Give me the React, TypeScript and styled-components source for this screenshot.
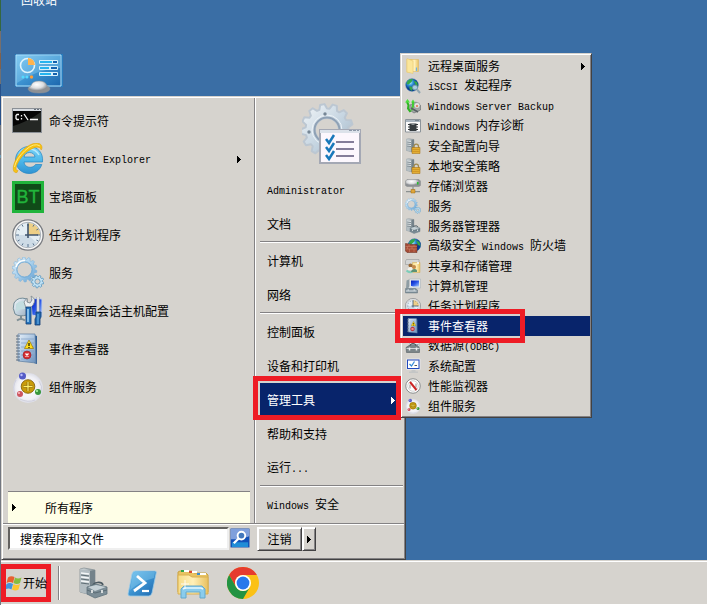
import React from "react";
import styled, { createGlobalStyle, css } from "styled-components";

const face = "#d6d3ce";
const navy = "#08246b";
const red = "#ee1c25";

const GlobalStyle = createGlobalStyle`
  *, *::before, *::after { box-sizing: border-box; }
  body { margin: 0; background: #3a6ea5; }
  button, input, a { font: inherit; color: inherit; }
  button { border: 0; background: none; padding: 0; text-align: left; cursor: default; }
  a { text-decoration: none; cursor: default; }
  svg { display: block; flex: none; }
`;

const raised = css`
  border: 1px solid;
  border-color: ${face} #424142 #424142 ${face};
  box-shadow: inset 1px 1px 0 #fff, inset -1px -1px 0 #848284;
`;

/* ---------- layout ---------- */

const Screen = styled.div`
  min-height: 100vh;
  display: grid;
  grid-template-columns: 1px minmax(0, 1fr);
  font-family: "Noto Sans CJK SC", sans-serif;
  font-size: 12px;
  line-height: 16px;
  color: #000;
  overflow: hidden;
`;

const Edge = styled.div`
  background: linear-gradient(#35673f 0 31px, #776f6c 31px 53px, #80614d 53px 69px,
    #6f7074 69px 84px, #28518a 84px 125px, #737780 125px 155px, #6d9ab3 155px 158px, #737780 158px);
`;

const Session = styled.div`
  display: flex;
  flex-direction: column;
  height: 100vh;
`;

const Desktop = styled.main`
  position: relative;
  flex: 1;
  background: #3a6ea5;
`;

const Shortcuts = styled.div`
  display: flex;
  flex-direction: column;
  align-items: center;
  gap: 46px;
  width: 76px;
  margin-top: -8px;
  color: #fff;
`;

const Taskbar = styled.footer`
  display: flex;
  align-items: center;
  height: 45px;
  background: ${face};
  border-top: 1px solid ${face};
  border-bottom: 1px solid #fff;
  box-shadow: inset 0 1px 0 #fff;
`;

const StartButton = styled.button`
  display: flex;
  align-items: center;
  gap: 1px;
  height: 38px;
  width: 50px;
  border: 5px solid ${red};
  white-space: nowrap;
`;

const Grip = styled.div`
  width: 2px;
  height: 34px;
  margin: 0 17px 0 7px;
  border-left: 1px solid #848284;
  border-right: 1px solid #fff;
`;

const Pinned = styled.nav`
  display: flex;
  gap: 18px;
`;

const StartMenu = styled.section`
  ${raised}
  position: absolute;
  left: 0;
  bottom: 0;
  width: 405px;
  padding: 1px;
  background: ${face};
`;

const Columns = styled.div`
  display: grid;
  grid-template-columns: 251px minmax(0, 1fr);
  border-bottom: 1px solid #848284;
`;

const Programs = styled.nav`
  display: flex;
  flex-direction: column;
  padding: 4px 4px 0 5px;
`;

const ProgramItem = styled.button`
  display: flex;
  align-items: center;
  gap: 5px;
  height: 38px;
  padding: 0 9px 0 4px;
`;

const Grow = styled.span`
  flex: 1;
`;

const AllPrograms = styled.button`
  display: flex;
  align-items: center;
  gap: 29px;
  height: 32px;
  margin-top: auto;
  padding-left: 4px;
  background: #ffffe7;
  border-top: 1px solid #848284;
`;

const Places = styled.nav`
  display: flex;
  flex-direction: column;
  border-left: 1px solid #848284;
  box-shadow: inset 1px 0 0 #fff;
  padding: 0 1px 1px 5px;
`;

const Portrait = styled.div`
  display: flex;
  justify-content: center;
  height: 75px;
  padding-top: 5px;
`;

const PlaceItem = styled.a<{ $active?: boolean }>`
  display: flex;
  align-items: center;
  justify-content: space-between;
  height: 34px;
  padding: 0 8px 0 7px;
  background: ${(p) => (p.$active ? navy : "transparent")};
  color: ${(p) => (p.$active ? "#fff" : "#000")};
`;

const Rule = styled.hr`
  width: 100%;
  margin: 0;
  height: 3px;
  border: 0;
  border-top: 1px solid #848284;
  box-shadow: inset 0 1px 0 #fff;
`;

const MenuFooter = styled.div`
  display: flex;
  align-items: flex-start;
  height: 34px;
  padding: 3px 0 0 5px;
  box-shadow: inset 0 1px 0 #fff;
`;

const SearchField = styled.input`
  width: 221px;
  height: 23px;
  padding: 0 10px;
  border: 2px solid;
  border-color: #63615f #efefef #efefef #63615f;
  border-radius: 0;
  background: #fff;
  outline: 0;
  &::placeholder { color: #000; opacity: 1; }
`;

const SearchButton = styled.button`
  margin: 0 7px 0 1px;
  padding-top: 1px;
`;

const PowerButton = styled.button<{ $narrow?: boolean }>`
  ${raised}
  display: flex;
  align-items: center;
  justify-content: center;
  width: ${(p) => (p.$narrow ? "14px" : "45px")};
  height: 24px;
  background: ${face};
  border-top-color: #fff;
  border-left-color: #fff;
`;

const Submenu = styled.nav`
  ${raised}
  position: absolute;
  left: 398px;
  bottom: 141px;
  width: 192px;
  display: flex;
  flex-direction: column;
  padding: 2px 1px 1px 2px;
  background: ${face};
`;

const ToolItem = styled.button<{ $active?: boolean }>`
  display: flex;
  align-items: center;
  gap: 7px;
  height: 20px;
  padding: 0 5px 0 2px;
  white-space: nowrap;
  background: ${(p) => (p.$active ? navy : "transparent")};
  color: ${(p) => (p.$active ? "#fff" : "#000")};
`;

const Marker = styled.div<{ $kind: "place" | "tool" }>`
  position: absolute;
  pointer-events: none;
  border: 5px solid ${red};
  ${(p) =>
    p.$kind === "place"
      ? "left: 251px; bottom: 139px; width: 148px; height: 44px;"
      : "left: 393px; bottom: 216px; width: 130px; height: 34px;"}
`;

const Latin = styled.span`
  font-family: "Liberation Mono", monospace;
  font-size: 10px;
  white-space: pre;
`;

const Label = ({ children }: { children: string }) => (
  <span>
    {children.split(/([\x20-\x7e]+)/).map((part, i) =>
      i % 2 ? <Latin key={i}>{part}</Latin> : part
    )}
  </span>
);

/* ---------- icons ---------- */

type IconProps = { size?: number };

const Svg = ({ size = 32, box = 32, children }: { size?: number; box?: number; children: React.ReactNode }) => (
  <svg width={size} height={size} viewBox={`0 0 ${box} ${box}`} aria-hidden="true">
    {children}
  </svg>
);

const Arrow = () => (
  <svg width="4" height="7" viewBox="0 0 4 7" shapeRendering="crispEdges" aria-hidden="true">
    <path d="M0 0h1v1h1v1h1v1h1v1h-1v1h-1v1h-1v1h-1z" fill="currentColor" />
  </svg>
);

const gearPath = (cx: number, cy: number, outer: number, inner: number, hole: number, teeth: number) => {
  const pts: string[] = [];
  for (let i = 0; i < teeth; i++) {
    const steps: [number, number][] = [[0, inner], [0.2, outer], [0.55, outer], [0.75, inner]];
    for (const [t, r] of steps) {
      const a = ((i + t) / teeth) * Math.PI * 2;
      pts.push(`${(cx + r * Math.cos(a)).toFixed(2)} ${(cy + r * Math.sin(a)).toFixed(2)}`);
    }
  }
  return `M${pts.join("L")}ZM${cx - hole} ${cy}a${hole} ${hole} 0 1 0 ${hole * 2} 0a${hole} ${hole} 0 1 0 ${-hole * 2} 0Z`;
};

const DefsSvg = styled.svg`
  position: absolute;
`;

const Defs = () => (
  <DefsSvg width="0" height="0" aria-hidden="true">
    <defs>
      <linearGradient id="ice" x2="1" y2="1"><stop stopColor="#e8f5fc" /><stop offset=".5" stopColor="#a9d0ec" /><stop offset="1" stopColor="#5b9bd0" /></linearGradient>
      <linearGradient id="steel" x2="1" y2="1"><stop stopColor="#f4f7f9" /><stop offset=".55" stopColor="#c3d3e0" /><stop offset="1" stopColor="#9fb0bf" /></linearGradient>
      <linearGradient id="case" x2="1" y2="1"><stop stopColor="#e3e8ea" /><stop offset=".5" stopColor="#8b979c" /><stop offset="1" stopColor="#4d5a60" /></linearGradient>
      <linearGradient id="blue" x2="1" y2="1"><stop stopColor="#7cc8f2" /><stop offset=".5" stopColor="#3c92d0" /><stop offset="1" stopColor="#1c66ad" /></linearGradient>
      <linearGradient id="screen" x2="1" y2="1"><stop stopColor="#0018b8" /><stop offset=".5" stopColor="#2a56e8" /><stop offset="1" stopColor="#a9cdf8" /></linearGradient>
      <linearGradient id="folder" x2="1"><stop stopColor="#f6dc88" /><stop offset=".5" stopColor="#fff0b8" /><stop offset="1" stopColor="#e9c160" /></linearGradient>
      <linearGradient id="book" x2="1" y2="1"><stop stopColor="#e4eef8" /><stop offset=".5" stopColor="#a9c3df" /><stop offset="1" stopColor="#6c90ba" /></linearGradient>
      <linearGradient id="ie" x2="0" y2="1"><stop stopColor="#7fd4f7" /><stop offset=".5" stopColor="#4fb9ea" /><stop offset="1" stopColor="#2f93d3" /></linearGradient>
      <radialGradient id="globe" cx=".35" cy=".3"><stop stopColor="#c7f5ff" /><stop offset=".45" stopColor="#3298dc" /><stop offset="1" stopColor="#073b91" /></radialGradient>
      <radialGradient id="ball" cx=".4" cy=".3"><stop stopColor="#fff" /><stop offset=".6" stopColor="#dcdddf" /><stop offset="1" stopColor="#8d9094" /></radialGradient>
      <radialGradient id="pearl"><stop stopColor="#fff" /><stop offset=".75" stopColor="#f0f0f5" /><stop offset="1" stopColor="#dcdde6" /></radialGradient>
    </defs>
  </DefsSvg>
);

const ControlPanelIcon = () => (
  <svg width="48" height="42" viewBox="0 0 48 42" aria-hidden="true">
    <path d="M0 0h48v33h-48z" fill="#277bbd" />
    <path d="M1 1h45v31h-45z" fill="url(#blue)" stroke="#b2e2fa" />
    <path d="M2 2h43v12q-23 1-43 15z" fill="#8bd0f3" opacity=".4" />
    <circle cx="12.500" cy="11.500" r="7" fill="none" stroke="#dff4fd" strokeWidth="1.600" />
    <path d="M13 11V4a7 7 0 0 1 7 7z" fill="#ffb34d" />
    <g fill="#54d9ff"><circle cx="8" cy="23" r="1.500" /><circle cx="12" cy="23" r="1.500" /></g><circle cx="16.500" cy="23" r="1.700" fill="#ff9d37" />
    <g fill="#d5f0fc"><rect x="24" y="6" width="19" height="4" rx="1" /><rect x="24" y="12" width="19" height="4" rx="1" /><rect x="24" y="18" width="19" height="4" rx="1" /></g>
    <path d="M25 8h12M25 14h9M25 20h11" stroke="#26b4ef" strokeWidth="2" /><path d="M38 8h4M36 14h6M38 20h4" stroke="#1261af" strokeWidth="2" />
    <path d="M13 35q0-2 3-3q1-5 8-5t8 5q3 1 3 3q-1 4-11 4t-11-4" fill="url(#ball)" stroke="#8d9398" strokeWidth=".5" />
  </svg>
);

const CmdIcon = () => (
  <Svg>
    <path d="M0 3h30v25H0z" fill="#8b9096" /><path d="M1 4h28v2H1z" fill="#d8dde3" /><path d="M22 4.500h2m1 0h2m1 0h1" stroke="#68717b" />
    <path d="M1 6h28v21H1z" fill="#050505" /><path d="M1 27v-6q14-4 28-14v20z" fill="#242724" />
    <path d="M7 9.500H5l-1 1v3l1 1h2M9.500 10v1.500m0 1.500v1.500M12 9l4 6M18 14.500h8" fill="none" stroke="#f8f8f8" strokeWidth="1.300" />
  </Svg>
);

const IeIcon = () => (
  <Svg>
    <path d="M30.500 19H12c.2 6 9 7 11.500 2.500h6.300C27.500 28.500 22 30.500 17 30.500 9 30.500 3.500 24 3.500 17S9 3.500 17 3.500c9 0 14.500 6.500 13.500 15.500zM12 14h11c-.5-6-10.300-6-11 0z" fill="url(#ie)" stroke="#2384c3" strokeWidth=".7" fillRule="evenodd" />
    <path d="M6 17C6 10 11 6 17 6q7 0 10 6" fill="none" stroke="#b5e8fc" strokeWidth="1.500" />
    <path d="M5 29.500C-1 31 0 19 9 9S29-2.500 30 4c.2 1-.3 2-.8 3C28 2 21 4 14 9.500 6 17 1 28 6 27.500z" fill="#f7c315" stroke="#dc9e0a" strokeWidth=".5" />
    <path d="M2.500 24Q4 16 13 7.500T28 3" fill="none" stroke="#ffe978" />
  </Svg>
);

const BtIcon = () => (
  <Svg>
    <path d="M0 0h32v32H0z" fill="#20b43b" /><path d="M3 3h26v26H3z" fill="#104b18" />
    <text x="16" y="22" textAnchor="middle" fontFamily="Liberation Sans" fontSize="18" fill="#21b43b" stroke="#21b43b" strokeWidth=".4">BT</text>
  </Svg>
);

const ClockIcon = ({ size }: IconProps) => (
  <Svg size={size}>
    <circle cx="16" cy="16" r="15.200" fill="#f8f8f8" stroke="#787b80" strokeWidth="1.300" /><circle cx="16" cy="16" r="12.700" fill="#e4eef4" stroke="#a8aeb5" />
    <path d="M16 16V4a12 12 0 0 1 12 12z" fill="#edcf87" /><path d="M4 16A12 12 0 0 0 25 24L16 16z" fill="#cddbe6" />
    <path d="M16 4v3M28 16h-3M16 28v-3M4 16h3M22 5.600l-1 2M26.400 10l-2 1M26.400 22l-2-1M22 26.400l-1-2M10 26.400l1-2M5.600 22l2-1M5.600 10l2 1M10 5.600l1 2" stroke="#59738e" />
    <path d="M16 5v14M13 16h13" stroke="#40556e" strokeWidth="1.600" />
  </Svg>
);

const ServicesIcon = ({ size }: IconProps) => (
  <Svg size={size}>
    <path d={gearPath(12.5, 12.5, 12.5, 10.3, 7.4, 14)} fill="url(#ice)" stroke="#7fb4da" strokeWidth=".6" fillRule="evenodd" />
    <circle cx="12.500" cy="12.500" r="7.800" fill="none" stroke="#6ea9d6" strokeWidth=".8" />
    <path d="M4 10a9 9 0 0 1 9-6.500" fill="none" stroke="#fff" strokeWidth="1.500" />
    <path d={gearPath(25.5, 24.5, 6.4, 4.8, 2.6, 9)} fill="#c3e3f5" stroke="#5795bf" strokeWidth=".8" fillRule="evenodd" />
  </Svg>
);

const RemoteConfigIcon = () => (
  <Svg>
    <path d="M19 4q8-1 11 0v18l-10-2z" fill="url(#screen)" stroke="#c5d2e5" />
    <path d="M2 8Q6 1 15 4v16q-8 2-12-1-3-6-1-11" fill="url(#steel)" stroke="#738b96" /><path d="M4 9q5-5 10-2l-1 7Q7 14 4 17z" fill="#c3dde0" />
    <path d="M9 21v4M5 25.500q4-3 8 0" fill="none" stroke="#7d8e95" strokeWidth="2" />
    <path d="M14 13l-2-6 3-4v4l3 1 2-3-1-4q6 3 2 9l-3 3z" fill="#eceff0" stroke="#7e898f" strokeWidth=".8" />
    <path d="M14 12h5v17h-5z" fill="#2574bc" stroke="#123d75" strokeWidth=".8" /><path d="M16 14v13" stroke="#a4d6f8" strokeWidth="1.500" />
    <path d="M26 2v15" stroke="#9aa1a6" strokeWidth="3" /><path d="M26 2v15" stroke="#f1f2f3" strokeWidth="1.500" /><path d="M24 17h5v5l-1 2v6h-5v-6l1-2z" fill="#2269b0" stroke="#123d75" strokeWidth=".8" /><path d="M26 19v10" stroke="#72bbee" />
  </Svg>
);

const EventIcon = ({ size }: IconProps) => (
  <Svg size={size}>
    <path d="M22 2l3 1v28l-3-1z" fill="#2f5e96" /><path d="M6 1h17l1 29-18-2z" fill="url(#book)" stroke="#5c7ca1" strokeWidth=".7" />
    <path d="M9 6h13M9 10h13M9 14h13M9 18h13M9 22h13M9 26h13" stroke="#7f9fc4" strokeWidth=".7" />
    <path d="M4 3h4M4 6h4M4 9h4M4 12h4M4 15h4M4 18h4M4 21h4M4 24h4M4 27h4" stroke="#5f7183" strokeWidth="1.200" />
    <path d="M17 7l4.500 8.500h-9z" fill="#ffdd18" stroke="#9c7700" strokeWidth=".7" /><path d="M17 10v3m0 1v1" stroke="#272200" strokeWidth="1.300" />
    <circle cx="15" cy="22" r="4" fill="#d62d30" stroke="#931c27" strokeWidth=".6" /><path d="M13.500 20.500l3 3m0-3l-3 3" stroke="#fff" strokeWidth="1.400" />
  </Svg>
);

const ComponentIcon = ({ size }: IconProps) => (
  <Svg size={size}>
    <circle cx="16" cy="17" r="15" fill="url(#pearl)" /><path d="M4 9Q0 16 3 23M8 28q8 4 15 1M27 10q4 5 2 12" fill="none" stroke="#c9c9d8" strokeWidth=".8" />
    <circle cx="16" cy="15.500" r="6.800" fill="#c99c0a" stroke="#775600" strokeWidth=".8" /><path d="M11.500 15.500h9M16 11v9" stroke="#755000" strokeWidth="2.500" /><path d="M11.500 15.500h9M16 11v9" stroke="#fff06a" strokeWidth="1.300" />
    <circle cx="10.500" cy="5" r="3.500" fill="#545bc6" /><circle cx="9.500" cy="4" r="1.200" fill="#b9bcff" />
    <circle cx="8" cy="23" r="3" fill="#cc5560" /><circle cx="7" cy="22" r="1" fill="#ffc0c3" /><circle cx="26" cy="21" r="3" fill="#38963c" /><circle cx="25" cy="20" r="1" fill="#baffaf" />
  </Svg>
);

const PortraitIcon = () => (
  <svg width="60" height="62" viewBox="0 0 60 62" aria-hidden="true">
    <path d={gearPath(25, 27, 26, 21.5, 12, 13)} fill="url(#steel)" stroke="#bcc7d2" strokeWidth="2" strokeLinejoin="round" fillRule="evenodd" />
    <circle cx="25" cy="27" r="12.500" fill="none" stroke="#8fa1b5" strokeWidth="2" /><circle cx="25" cy="27" r="15" fill="none" stroke="#edf3f8" />
    <circle cx="23" cy="11" r="1.700" fill="#758695" /><circle cx="7" cy="29" r="1.700" fill="#758695" />
    <path d="M17 26h42v35H17z" fill="#a4a8b4" /><path d="M18 27h40v3H18z" fill="#dce2ea" /><path d="M47 27.500h3m1 0h3m1 0h2" stroke="#8c98a8" />
    <path d="M19 30h38v29H19z" fill="#fcf7fd" />
    <path d="M34 39h18M34 46h18M34 53h18" stroke="#847d99" strokeWidth="2" />
    <path d="M24 36l3 4 5-8M24 44l3 4 5-8M24 52l3 4 5-8" fill="none" stroke="#1878ba" strokeWidth="2.500" />
  </svg>
);

const Tower = () => (
  <>
    <path d="M3 2l4-1 11 2v22l-4 3-11-3z" fill="url(#case)" stroke="#7f8b91" strokeWidth=".7" /><path d="M3 2l10 2v24L3 25z" fill="#b3bdc2" />
    <path d="M4 6l8 1M4 10l8 1M4 14l8 1" stroke="#f4f7f8" strokeWidth="1.500" /><path d="M4 8l8 1M4 12l8 1M4 16l8 1" stroke="#5f6d74" strokeWidth="1.200" /><path d="M13 4l5-1v22l-5 3z" fill="#74828a" />
  </>
);

const ServerManagerIcon = ({ size }: IconProps) => (
  <Svg size={size}>
    <Tower />
    <path d="M16 19q0-3 4.500-3.500T26 18" fill="none" stroke="#4c5a62" strokeWidth="1.700" /><path d="M10 20l9-3 11 3v7l-12 4-8-4z" fill="#7c8d96" stroke="#5f727c" strokeWidth=".8" /><path d="M11 20l8-2 10 2-11 4z" fill="#c6d1d6" /><path d="M10 23l8 3 12-3" fill="none" stroke="#5a6b74" /><path d="M15 23v3m10-3v3" stroke="#e9eceb" strokeWidth="1.700" />
  </Svg>
);

const LockIcon = () => (
  <Svg size={16}>
    <Tower /><path d="M18 20v-3q0-5 4.500-5t4.500 5v3" fill="none" stroke="#a08a50" strokeWidth="2.500" /><path d="M14 19h16v12H14z" fill="#e3ae34" stroke="#a36a0a" /><path d="M15 23h14M15 27h14" stroke="#bd8119" />
  </Svg>
);

const FolderIcon = () => (
  <Svg size={16}>
    <path d="M3 2h12v27H3z" fill="#efcf78" /><path d="M11 3h16v24H11z" fill="url(#folder)" stroke="#dcb456" /><path d="M4 1l12 5v25L4 28z" fill="#fbe69a" stroke="#e5c468" /><path d="M23 19v7" stroke="#6fb2e0" strokeWidth="2.500" />
  </Svg>
);

const GlobeShape = () => (
  <>
    <circle cx="14" cy="14" r="12.500" fill="url(#globe)" stroke="#18579a" /><path d="M5 6q4-5 11-4l-3 6-6 5-4-1zM17 5l7 3 2 8-5-2-2-5zM9 16l7 3-2 7-5-4z" fill="#35a849" />
  </>
);

const IscsiIcon = () => (
  <Svg size={16}><GlobeShape /><circle cx="20" cy="19" r="5" fill="#a9cfe0" stroke="#7396a8" strokeWidth="2" /><path d="M24 23l6 7" stroke="#8fa5b1" strokeWidth="4" /></Svg>
);

const BackupIcon = () => (
  <Svg size={16}>
    <path d="M10 14l12-6 9 7v9l-13 6-9-6z" fill="#a5aaaa" stroke="#50595b" /><circle cx="24" cy="15" r="6" fill="#e3e6e4" stroke="#727b79" /><circle cx="24" cy="16" r="2.500" fill="#e08d70" />
    <path d="M4 8l3 6-1 7 5 7" fill="none" stroke="#2fb322" strokeWidth="4" /><path d="M0 9l5-7 5 7zM12 9l4-6 4 6z" fill="#4be03c" /><path d="M16 8v8l-3 9" fill="none" stroke="#43cb36" strokeWidth="4" /><path d="M12 20l14 8" stroke="#586063" strokeWidth="3" />
  </Svg>
);

const MemoryIcon = () => (
  <Svg size={16}>
    <path d="M1 3h30v25H1z" fill="#fbfbfb" stroke="#8c949a" strokeWidth="2" /><path d="M2 6h28" stroke="#aab6c0" strokeWidth="4" /><path d="M21 5h2m2 0h2" stroke="#485965" strokeWidth="2" />
    <path d="M9 11h14v15H9z" fill="#363d40" /><path d="M6 13h4m12 0h4M6 18h4m12 0h4M6 23h4m12 0h4" stroke="#303638" strokeWidth="2" /><path d="M13 11h6v3h-6z" fill="#8a9294" />
  </Svg>
);

const StorageIcon = () => (
  <Svg size={16}>
    <path d="M1 6l3-3h24l3 3v9l-3 2H4l-3-2z" fill="url(#ball)" stroke="#85898b" /><path d="M24 8h3v5h-3z" fill="#25bd2f" /><path d="M16 17v8M2 27h28" stroke="#8c9190" strokeWidth="2.500" /><path d="M12 23h8v7h-8z" fill="#dfa53a" stroke="#9e6b0e" />
  </Svg>
);

const FirewallIcon = () => (
  <Svg size={16}>
    <g transform="translate(5 0)"><GlobeShape /></g><path d="M1 11l14 2h9v16H4l-3-3z" fill="#a54c36" stroke="#672717" /><path d="M1 17h23M1 22h23M8 12v5m10-4v4M5 17v5m9-5v5M9 22v6m9-6v6" stroke="#d08a70" />
  </Svg>
);

const ShareIcon = () => (
  <Svg size={16}>
    <path d="M3 3h25v7l-3 3H1V6z" fill="#d3d5d5" stroke="#8b8f8f" /><path d="M15 9h15v20H15z" fill="url(#folder)" stroke="#d0a850" /><path d="M3 25q6 6 12 2" fill="none" stroke="#7ccdb9" strokeWidth="4" />
    <circle cx="11" cy="15" r="4" fill="#9c6b37" /><path d="M5 24q1-6 6-6t6 6z" fill="#f1f1ea" /><circle cx="18" cy="18" r="4" fill="#c48a4b" /><path d="M12 28q1-6 7-6t5 6z" fill="#5d9274" /><path d="M24 10h4" stroke="#fff" strokeWidth="3" />
  </Svg>
);

const ComputerIcon = () => (
  <Svg size={16}>
    <path d="M9 2h22v18H9z" fill="#e4e8ea" stroke="#a3adb4" /><path d="M12 5h16v12H12z" fill="url(#screen)" /><path d="M3 5l5-2v17l-6 1z" fill="#8e9ca3" /><path d="M1 21h20l4 3v6H1z" fill="#7d8e99" stroke="#65757f" /><path d="M8 20q0-3 4-3t4 3M5 24h3m9 0h3M2 26h21" fill="none" stroke="#e2e8eb" strokeWidth="2" />
  </Svg>
);

const DataSourceIcon = () => (
  <Svg size={16}><path d="M9 1h19v17H9z" fill="#e3ecf0" stroke="#8fa0aa" /><path d="M10 8h17M10 13h17" stroke="#9aa6ae" strokeWidth="2" /><path d="M10 16q0-5 6-5t6 5" fill="none" stroke="#464d51" strokeWidth="2" /><path d="M2 19l6-4h17l4 5v9H3z" fill="#7b8589" stroke="#444f54" /><path d="M3 21h26" stroke="#ced4d7" strokeWidth="2" /><path d="M9 19v6m14-6v6" stroke="#eee" strokeWidth="3" /></Svg>
);

const SysConfigIcon = () => (
  <Svg size={16}><path d="M3 2h27v21H3z" fill="#2149bd" stroke="#e6e6e8" strokeWidth="2" /><path d="M6 5h21v15H6z" fill="#fff" /><path d="M9 12l4 4 6-9" fill="none" stroke="#358bd9" strokeWidth="2.500" /><path d="M19 15h5" stroke="#555" strokeWidth="2" /><path d="M13 24h8v3h5v3H8v-3h5z" fill="#c4c6c6" /></Svg>
);

const PerfIcon = () => (
  <Svg size={16}><circle cx="16" cy="16" r="14.500" fill="#fff" stroke="#8a8d8d" strokeWidth="2" /><circle cx="16" cy="16" r="10.500" fill="#fff" stroke="#a5a5a5" /><path d="M10 21v-8M22 19v-8" stroke="#8d8d8d" strokeWidth="2" /><path d="M10 8l13 16" stroke="#cb2525" strokeWidth="4" /></Svg>
);

const SearchIcon = () => (
  <Svg size={20} box={21}><rect x=".5" y=".5" width="20" height="20" rx="1" fill="#1c55b8" stroke="#8195bd" /><path d="M1 1h19v8q-9 4-19 3z" fill="#7f9fdc" /><path d="M1 12q10 1 19-3v11H1z" fill="#104fb8" /><path d="M2 15h17v5H2z" fill="#28a8e4" opacity=".7" /><circle cx="12" cy="8" r="4" fill="#4277bc" stroke="#fff" strokeWidth="2" /><path d="M9 11l-5 5" stroke="#fff" strokeWidth="2.500" /></Svg>
);

const WindowsIcon = () => (
  <Svg size={16}><path d="M4 5q6-4 13-1l-3 12q-6-4-13 0z" fill="#e8602f" /><path d="M18 5q6 4 13 0l-3 11q-6 4-13 0z" fill="#86bd3f" /><path d="M1 18q6-4 13 0l-3 11q-6-4-13 0z" fill="#4394dc" /><path d="M15 18q6 4 13 0l-3 11q-6 4-13 0z" fill="#fdc52f" /></Svg>
);

const PowerShellIcon = () => (
  <Svg><path d="M8 4h20q2 0 1 3l-4 19q-1 3-3 3H3q-2 0-2-2L5 7q1-3 3-3z" fill="url(#blue)" stroke="#9bcbe8" strokeWidth=".8" /><path d="M8 5h20l-1 6Q14 14 3 23L6 7z" fill="#7dc5ec" opacity=".5" /><path d="M10 9l8 7-11 8" fill="none" stroke="#fff" strokeWidth="2.800" /><path d="M15 24h7" stroke="#fff" strokeWidth="2.200" /></Svg>
);

const ExplorerIcon = () => (
  <Svg>
    <path d="M1 5l2-1h12l2 2h12l2 2v17H1z" fill="#e8c362" stroke="#c9a243" /><path d="M4 3h3v2H4z" fill="#2fa548" /><path d="M12 4h3v2h-3z" fill="#d9482f" /><path d="M20 6h3v2h-3z" fill="#388ed1" /><path d="M7 4h5M15 5h5M23 7h6" stroke="#fff" strokeWidth="2" />
    <path d="M1 8h11l3 2h16v17H1z" fill="url(#folder)" stroke="#dab050" /><path d="M4 31v-9l3-3h18l3 3v9h-5v-6H9v6z" fill="#8accec" stroke="#62a8cc" /><path d="M6 22l2-1h16l2 1" fill="none" stroke="#e4f7ff" strokeWidth="1.500" /><path d="M8 13v9M4 17h8" stroke="#fff" opacity=".9" />
  </Svg>
);

const ChromeIcon = () => (
  <Svg>
    <circle cx="16" cy="16" r="16" fill="#fbc116" /><path d="M2.140 8A16 16 0 0 1 29.860 8H16a8 8 0 0 0-6.930 12z" fill="#e63b2e" /><path d="M2.140 8A16 16 0 0 0 16 32l6.930-12A8 8 0 0 1 9.070 20z" fill="#229342" />
    <circle cx="16" cy="16" r="8" fill="#fff" /><circle cx="16" cy="16" r="6.400" fill="#2878eb" />
  </Svg>
);

/* ---------- content ---------- */

const programs = [
  { name: "命令提示符", icon: <CmdIcon /> },
  { name: "Internet Explorer", icon: <IeIcon />, more: true },
  { name: "宝塔面板", icon: <BtIcon /> },
  { name: "任务计划程序", icon: <ClockIcon /> },
  { name: "服务", icon: <ServicesIcon /> },
  { name: "远程桌面会话主机配置", icon: <RemoteConfigIcon /> },
  { name: "事件查看器", icon: <EventIcon /> },
  { name: "组件服务", icon: <ComponentIcon /> },
];

const placeGroups = [
  ["Administrator", "文档"],
  ["计算机", "网络"],
  ["控制面板", "设备和打印机", "管理工具", "帮助和支持", "运行..."],
  ["Windows 安全"],
];

const tools = [
  { name: "远程桌面服务", icon: <FolderIcon />, more: true },
  { name: "iSCSI 发起程序", icon: <IscsiIcon /> },
  { name: "Windows Server Backup", icon: <BackupIcon /> },
  { name: "Windows 内存诊断", icon: <MemoryIcon /> },
  { name: "安全配置向导", icon: <LockIcon /> },
  { name: "本地安全策略", icon: <LockIcon /> },
  { name: "存储浏览器", icon: <StorageIcon /> },
  { name: "服务", icon: <ServicesIcon size={16} /> },
  { name: "服务器管理器", icon: <ServerManagerIcon size={16} /> },
  { name: "高级安全 Windows 防火墙", icon: <FirewallIcon /> },
  { name: "共享和存储管理", icon: <ShareIcon /> },
  { name: "计算机管理", icon: <ComputerIcon /> },
  { name: "任务计划程序", icon: <ClockIcon size={16} /> },
  { name: "事件查看器", icon: <EventIcon size={16} /> },
  { name: "数据源(ODBC)", icon: <DataSourceIcon /> },
  { name: "系统配置", icon: <SysConfigIcon /> },
  { name: "性能监视器", icon: <PerfIcon /> },
  { name: "组件服务", icon: <ComponentIcon size={16} /> },
];

export default function App() {
  return (
    <Screen>
      <GlobalStyle />
      <Edge />
      <Session>
        <Desktop>
          <Defs />
          <Shortcuts>
            <span>回收站</span>
            <ControlPanelIcon />
          </Shortcuts>
          <StartMenu>
            <Columns>
              <Programs>
                {programs.map((p) => (
                  <ProgramItem key={p.name}>
                    {p.icon}
                    <Label>{p.name}</Label>
                    <Grow />
                    {p.more && <Arrow />}
                  </ProgramItem>
                ))}
                <AllPrograms><Arrow /><Label>所有程序</Label></AllPrograms>
              </Programs>
              <Places>
                <Portrait><PortraitIcon /></Portrait>
                {placeGroups.map((group, i) => (
                  <React.Fragment key={i}>
                    {i > 0 && <Rule />}
                    {group.map((name) => (
                      <PlaceItem key={name} href="#" $active={name === "管理工具"}>
                        <Label>{name}</Label>
                        {name === "管理工具" && <Arrow />}
                      </PlaceItem>
                    ))}
                  </React.Fragment>
                ))}
              </Places>
            </Columns>
            <MenuFooter>
              <SearchField type="text" aria-label="搜索程序和文件" placeholder="搜索程序和文件" />
              <SearchButton aria-label="搜索"><SearchIcon /></SearchButton>
              <PowerButton>注销</PowerButton>
              <PowerButton $narrow aria-label="更多选项"><Arrow /></PowerButton>
            </MenuFooter>
            <Submenu>
              {tools.map((t) => (
                <ToolItem key={t.name} $active={t.name === "事件查看器"}>
                  {t.icon}
                  <Label>{t.name}</Label>
                  <Grow />
                  {t.more && <Arrow />}
                </ToolItem>
              ))}
            </Submenu>
            <Marker $kind="place" />
            <Marker $kind="tool" />
          </StartMenu>
        </Desktop>
        <Taskbar>
          <StartButton><WindowsIcon /><span>开始</span></StartButton>
          <Grip />
          <Pinned>
            <button aria-label="服务器管理器"><ServerManagerIcon /></button>
            <button aria-label="PowerShell"><PowerShellIcon /></button>
            <button aria-label="资源管理器"><ExplorerIcon /></button>
            <button aria-label="Chrome"><ChromeIcon /></button>
          </Pinned>
        </Taskbar>
      </Session>
    </Screen>
  );
}
